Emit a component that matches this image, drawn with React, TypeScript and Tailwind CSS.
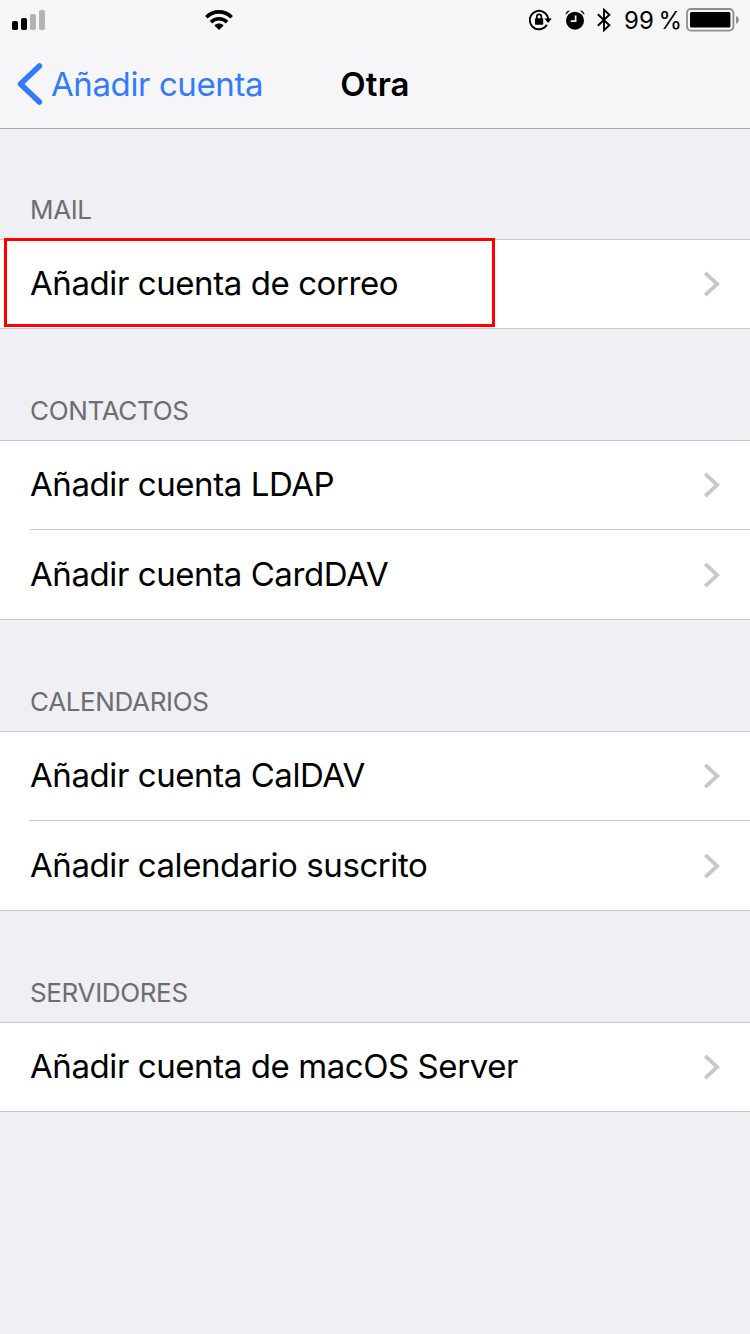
import { clsx } from 'clsx';

type Section = { title: string; items: string[]; highlighted?: boolean };

const SECTIONS: Section[] = [
  { title: 'MAIL', items: ['Añadir cuenta de correo'], highlighted: true },
  { title: 'CONTACTOS', items: ['Añadir cuenta LDAP', 'Añadir cuenta CardDAV'] },
  { title: 'CALENDARIOS', items: ['Añadir cuenta CalDAV', 'Añadir calendario suscrito'] },
  { title: 'SERVIDORES', items: ['Añadir cuenta de macOS Server'] },
];

function SignalIcon() {
  return (
    <svg width="34" height="20" viewBox="0 0 34 20">
      <rect x="0" y="11" width="6" height="9" rx="1.8" />
      <rect x="9" y="8" width="6" height="12" rx="1.8" />
      <rect x="18" y="4" width="6" height="16" rx="1.8" fill="#b3b3b5" />
      <rect x="27" y="0" width="6" height="20" rx="1.8" fill="#b3b3b5" />
    </svg>
  );
}

function WifiIcon() {
  return (
    <svg width="28" height="20" viewBox="0 0 28 20" fill="none" stroke="#000" strokeWidth="3.6">
      <path d="M1.3 7.2C8.4 0.1 19.6 0.1 26.7 7.2" />
      <path d="M5.9 12.1c4.6-4.5 11.6-4.5 16.2 0" />
      <path d="M14 20l-4.6-4.6c2.6-2.4 6.6-2.4 9.2 0z" fill="#000" stroke="none" />
    </svg>
  );
}

function RotationLockIcon() {
  return (
    <svg width="23" height="22" viewBox="0 0 23 22">
      <path d="M17.9 15.8A9.2 9.2 0 1 1 19.2 10.6" fill="none" stroke="#000" strokeWidth="1.9" />
      <path d="M15.4 9.6h7.4l-3.7 4.3z" />
      <rect x="6" y="9.2" width="8.2" height="6.6" rx="0.8" />
      <path d="M7.8 10V7.7a2.3 2.3 0 0 1 4.6 0V10" fill="none" stroke="#000" strokeWidth="1.7" />
    </svg>
  );
}

function AlarmIcon() {
  return (
    <svg width="20" height="20" viewBox="0 0 20 20">
      <circle cx="10" cy="10.7" r="9" />
      <path d="M0.5 5C0.6 2.2 2.2 0.6 5 0.5z" />
      <path d="M19.5 5C19.4 2.2 17.8 0.6 15 0.5z" />
      <path d="M10.6 5.4v5.8H5.8" fill="none" stroke="#f6f6f8" strokeWidth="1.7" />
    </svg>
  );
}

function BluetoothIcon() {
  return (
    <svg width="14" height="24" viewBox="0 0 14 24" fill="none" stroke="#000" strokeWidth="1.9">
      <path d="M0.8 6.2L12.4 17.2L7 22.2V1.8L12.4 6.8L0.8 17.8" />
    </svg>
  );
}

function BatteryIcon() {
  return (
    <svg width="54" height="24" viewBox="0 0 54 24">
      <rect x="1" y="1" width="46.4" height="21.6" rx="4" fill="none" stroke="#8e8e92" strokeWidth="1.8" />
      <rect x="4" y="4" width="40.4" height="15.6" rx="1.5" />
      <path d="M50 8c3.8 1.2 3.8 6.6 0 7.8z" fill="#8e8e92" />
    </svg>
  );
}

function StatusBar() {
  return (
    <div className="flex h-10 items-center justify-between pl-3 pr-[10px]">
      <div className="flex items-center gap-[159px]">
        <SignalIcon />
        <WifiIcon />
      </div>
      <div className="flex items-center">
        <RotationLockIcon />
        <span className="ml-[13px]"><AlarmIcon /></span>
        <span className="ml-3"><BluetoothIcon /></span>
        <span className="ml-[13px] mr-[6px] w-[56px] whitespace-nowrap pt-[2px] text-[24px] leading-6 tracking-[0.2px] [word-spacing:-2.5px]">99 %</span>
        <BatteryIcon />
      </div>
    </div>
  );
}

function NavBar() {
  return (
    <div className="grid h-[88px] grid-cols-[1fr_auto_1fr] items-center">
      <button className="flex items-center gap-2 pl-[17px] text-[33px] leading-10 tracking-[-0.4px] text-[#337bfd]">
        <svg width="26" height="42" viewBox="0 0 26 42" fill="none" stroke="currentColor" strokeWidth="5.6" strokeLinecap="round" strokeLinejoin="round">
          <path d="M22.4 3L3.5 21L22.4 39" />
        </svg>
        Añadir cuenta
      </button>
      <h1 className="text-[33px] font-semibold leading-10 tracking-[0.2px]">Otra</h1>
    </div>
  );
}

function Row({ label, first, highlighted }: { label: string; first: boolean; highlighted?: boolean }) {
  return (
    <div className={clsx('relative ml-[30px] flex items-center justify-between pr-[30px]', first ? 'h-[88px]' : 'h-[90px] border-t border-[#c8c7cc]')}>
      <span className="pb-[2px] text-[33px] leading-10 tracking-[-0.42px]">{label}</span>
      <svg width="17" height="26" viewBox="0 0 17 26" fill="none" stroke="#c7c7cc" strokeWidth="3.8">
        <path d="M2.2 1.8L14.2 13L2.2 24.2" />
      </svg>
      {highlighted && <div className="absolute -left-[26px] -top-[2px] h-[89px] w-[491px] border-[3px] border-[#fe0000]" />}
    </div>
  );
}

export default function App() {
  return (
    <div className="min-h-[1334px] w-[750px] bg-[#efeff4] font-[Inter,'Liberation_Sans',sans-serif] text-black">
      <header className="h-[129px] border-b border-[#a9a9ae] bg-[#f6f6f8]">
        <StatusBar />
        <NavBar />
      </header>
      {SECTIONS.map((section, i) => (
        <section key={section.title}>
          <h2 className={clsx('flex items-end pb-[13px] pl-[30px] text-[26px] leading-8 tracking-[-0.35px] text-[#6d6d72]', i === 0 ? 'h-[110px]' : 'h-[111px]')}>{section.title}</h2>
          <div className="border-y border-[#c8c7cc] bg-white">
            {section.items.map((item, n) => (
              <Row key={item} label={item} first={n === 0} highlighted={section.highlighted} />
            ))}
          </div>
        </section>
      ))}
    </div>
  );
}
